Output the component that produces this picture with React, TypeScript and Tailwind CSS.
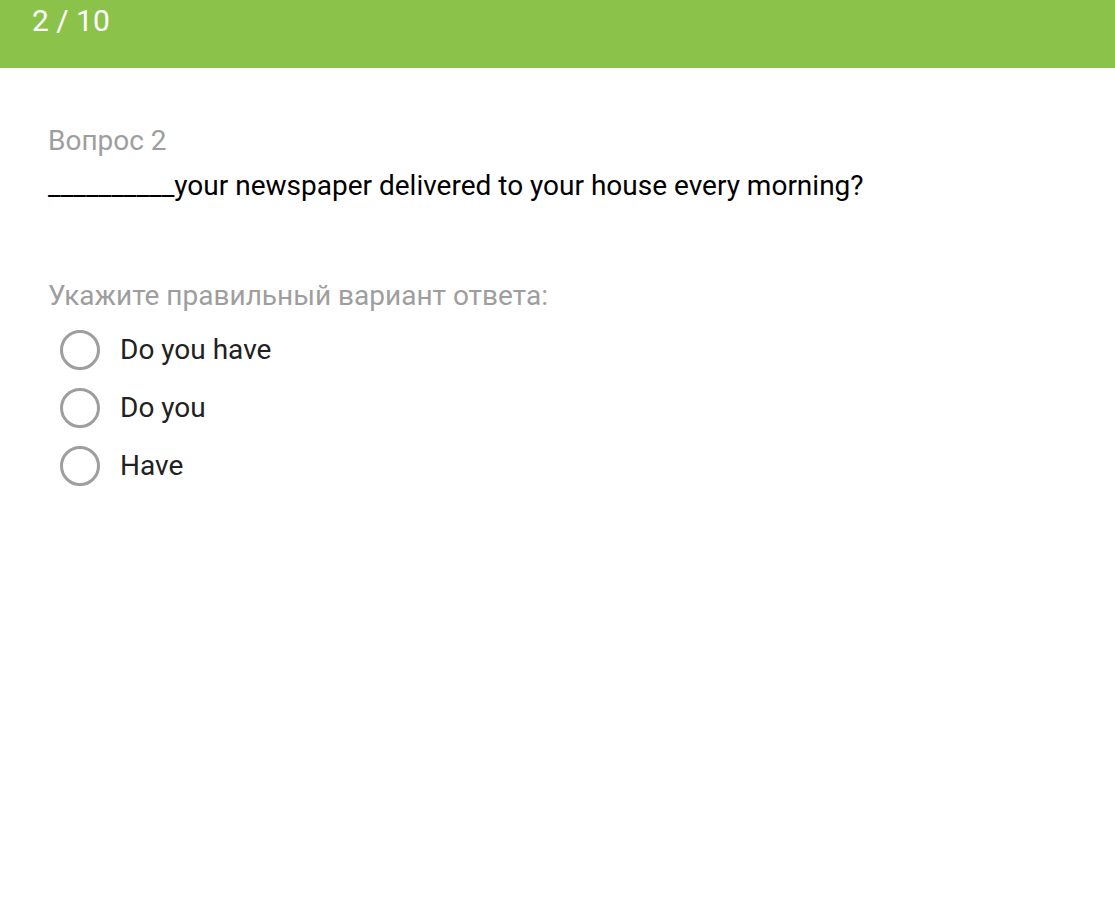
export default function App() {
  const options = ["Do you have", "Do you", "Have"];
  return (
    <div className="min-h-[911px] bg-white" style={{ fontFamily: "Roboto, 'Noto Sans', sans-serif" }}>
      <div className="h-[68px] bg-[#8bc34a] px-[32px] pt-[1px]">
        <div className="text-[30px] leading-[40px] text-white">2 / 10</div>
      </div>
      <div className="px-[48px] pt-[56px]">
        <div className="text-[28px] leading-[34px] text-[#9e9e9e]">Вопрос 2</div>
        <div className="mt-[11px] text-[28px] leading-[34px] text-black">__________your newspaper delivered to your house every morning?</div>
        <div className="mt-[76px] text-[28px] leading-[34px] text-[#9e9e9e]">Укажите правильный вариант ответа:</div>
        <div className="mt-[17px] flex flex-col gap-[18px]">
          {options.map((o) => (
            <div key={o} className="flex items-center">
              <div className="ml-[12px] h-[40px] w-[40px] rounded-full border-[3px] border-[#9e9e9e]" />
              <div className="ml-[20px] text-[28px] leading-[34px] text-[#212121]">{o}</div>
            </div>
          ))}
        </div>
      </div>
    </div>
  );
}
